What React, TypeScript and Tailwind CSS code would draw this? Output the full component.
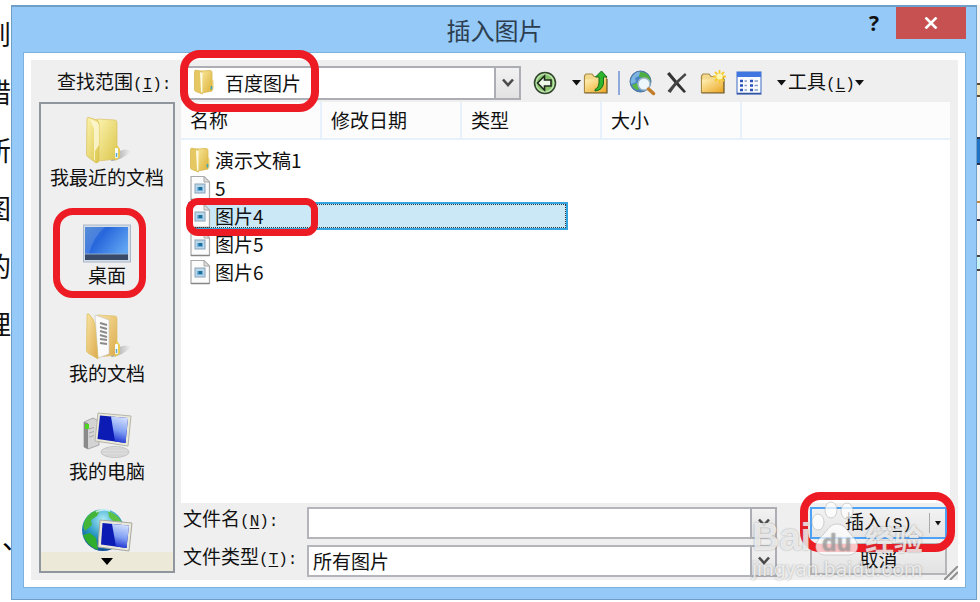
import { ReactNode, useId } from "react";

const DOC_LEFT = ["到", "错", "所", "图", "的", "理"];
const COLUMNS = ["名称", "修改日期", "类型", "大小"];
const FILES = [
  { name: "演示文稿1", folder: true },
  { name: "5" },
  { name: "图片4", selected: true },
  { name: "图片5" },
  { name: "图片6" },
];

function Ring({ className }: { className: string }) {
  return (
    <span
      aria-hidden="true"
      className={"pointer-events-none absolute z-10 border-[#ed1c24] " + className}
    />
  );
}

function Key({ children, colon = false }: { children: string; colon?: boolean }) {
  return (
    <span className="font-['Liberation_Mono',monospace] text-base">
      (<span className="underline underline-offset-2">{children}</span>){colon && ":"}
    </span>
  );
}

function Caret() {
  return (
    <svg width="9" height="6" viewBox="0 0 9 6" aria-hidden="true">
      <path d="M0 0H9L4.500 5.500Z" fill="#111" />
    </svg>
  );
}

function DropMark() {
  return (
    <span
      aria-hidden="true"
      className="pointer-events-none absolute inset-y-0 right-0 flex w-[27px] items-center justify-center border-2 border-[#acaeb3] bg-linear-to-b from-[#f2f2f2] to-[#e2e2e2]"
    >
      <svg width="12" height="10" viewBox="0 0 12 10">
        <path d="M1 1.500L6 7L11 1.500" fill="none" stroke="#4b4b4b" strokeWidth="2.600" />
      </svg>
    </span>
  );
}

/* ---------- file icons ---------- */

function SmallFolder() {
  return (
    <svg width="22" height="26" viewBox="0 0 22 26" aria-hidden="true">
      <defs>
        <linearGradient id="sf" x1="0" y1="0" x2="1" y2="1">
          <stop offset="0" stopColor="#f8e69a" />
          <stop offset="1" stopColor="#dcb238" />
        </linearGradient>
      </defs>
      <path d="M8 2L17 1.500Q19 1.500 19 3.500V22L9 24Z" fill="url(#sf)" stroke="#d9b750" strokeWidth=".8" />
      <path d="M1.500 2.500Q1.500 1 3 1.200L8.500 2.200L9.500 25L3 22.500Q1.500 22 1.500 20.500Z" fill="#e6c862" stroke="#d9b84f" strokeWidth=".8" />
      <path d="M7 3L9.500 4V24L8 23Z" fill="#fffbe2" />
      <path d="M19 10L20.500 12V20L19 22Z" fill="#e9cf72" />
      <path d="M18.500 17V20.500" stroke="#3fa5b8" strokeWidth="1.600" />
    </svg>
  );
}

function PictureFile() {
  return (
    <svg width="22" height="26" viewBox="0 0 22 26" aria-hidden="true">
      <path d="M2 1.500H15L20.500 7V24.500H2Z" fill="#fbfbfb" stroke="#a9a9a9" strokeWidth="1.200" />
      <path d="M2 24.500H20.500" stroke="#858585" strokeWidth="1.500" />
      <path d="M15 1.500V7H20.500Z" fill="#dedede" stroke="#aaa" />
      <rect x="6" y="9" width="10" height="9" fill="#b9d6ea" stroke="#8ba5b8" />
      <path d="M8 12H14V16H8Z" fill="#6fb0dd" />
      <path d="M9.500 12H13V15H9.500Z" fill="#1d6e96" />
    </svg>
  );
}

/* ---------- places icons ---------- */

function RecentIcon({ docs = false }: { docs?: boolean }) {
  const g = docs ? "docsFolder" : "recentFolder";
  return (
    <svg width="52" height="50" viewBox="0 0 52 50" aria-hidden="true">
      <defs>
        <linearGradient id={g} x1="0" y1="0" x2="1" y2="1">
          <stop offset="0" stopColor={docs ? "#f9e3a3" : "#fbf3ae"} />
          <stop offset="1" stopColor={docs ? "#dcaa4c" : "#dcc64c"} />
        </linearGradient>
        <linearGradient id={g + "Shade"} x1="0" y1="0" x2="1" y2="0">
          <stop offset="0" stopColor="#777" stopOpacity=".8" />
          <stop offset="1" stopColor="#8a8a8a" stopOpacity="0" />
        </linearGradient>
      </defs>
      <path d="M30 46Q42 45 50 36Q45 32 34 38Z" fill={"url(#" + g + "Shade)"} />
      <path d="M16 4L34 5Q36 5 36 8V44L17 46Z" fill={"url(#" + g + ")"} stroke="#dbc268" strokeWidth=".7" />
      {docs && (
        <>
          <path d="M14 4L28 9V43L17 47Z" fill="#fafafa" stroke="#c8c8c8" strokeWidth=".7" />
          <path d="M19 12L26 14M19 16L26 18M19 20L26 22M19 24L26 26M19 28L26 29M19 32L26 33" stroke="#8a8a8a" strokeWidth="2" />
        </>
      )}
      <path
        d={
          docs
            ? "M6 4Q6 2 8 3L12 8Q13 10 14 14L17 48L7 42Q5.500 41 5.500 39Z"
            : "M6 4Q6 2 8 2.500L16 5Q18 6 18 9V44Q18 48 15 48L7 42Q5.500 41 5.500 39Z"
        }
        fill={"url(#" + g + ")"}
        stroke="#d9bd58"
        strokeWidth=".7"
      />
      {!docs && <path d="M9 4L16 7Q18 8 18 12V30L14 36V46L13 45V14Z" fill="#fffbe0" opacity=".75" />}
      <path d="M36 30L39 34V42L34 46V34Z" fill="#e7cb55" />
      <rect x="34" y="33" width="3" height="10" rx="1" fill="#f6fcff" />
      <path d="M35.500 38V42" stroke="#5aa7cf" strokeWidth="1.500" />
    </svg>
  );
}

function DesktopIcon() {
  return (
    <svg width="52" height="50" viewBox="0 0 52 50" aria-hidden="true">
      <defs>
        <linearGradient id="desk" x1="0" y1="0" x2="1" y2=".6">
          <stop offset="0" stopColor="#3a7bd0" />
          <stop offset=".4" stopColor="#2767dc" />
          <stop offset="1" stopColor="#5fa5f2" />
        </linearGradient>
      </defs>
      <rect x="2.500" y="12" width="47" height="37" fill="#d5dde7" stroke="#a9b8c9" />
      <rect x="4" y="14" width="43" height="33" fill="url(#desk)" />
      <path d="M4 14H24Q12 24 8 41H4Z" fill="#fff" opacity=".14" />
      <rect x="4" y="41" width="43" height="6" fill="#384a68" />
      <path d="M4 41H47" stroke="#8ca8cf" />
    </svg>
  );
}

function ShineGradient({ id }: { id: string }) {
  return (
    <linearGradient id={id} x1=".6" y1="0" x2=".4" y2="1">
      <stop offset="0" stopColor="#d3e0fd" />
      <stop offset=".55" stopColor="#7f9df3" />
      <stop offset="1" stopColor="#1b2fd0" />
    </linearGradient>
  );
}

function ComputerIcon() {
  return (
    <svg width="52" height="50" viewBox="0 0 52 50" aria-hidden="true">
      <defs>
        <ShineGradient id="pc" />
      </defs>
      <path d="M3 13L12 9L18 12V36L7 40L3 38Z" fill="#d4d4d4" stroke="#999" strokeWidth=".8" />
      <path d="M3 13L7 14V40L3 38Z" fill="#8a8a8a" />
      <path d="M8 20L13 18.500M8 24L13 22.500M8 28L13 26.500" stroke="#aaa" />
      <rect x="4" y="15" width="4" height="5" fill="#4fd41f" />
      <ellipse cx="34" cy="43" rx="14" ry="5.500" fill="#dcdcdc" stroke="#c4c4c4" />
      <path d="M21 43H47M24 40H44M24 46H44" stroke="#cacaca" strokeWidth=".8" />
      <path d="M17 4L50 7L47 37L14 32Z" fill="#ebe9d9" stroke="#b7b6ab" />
      <path d="M19 6.500L47 9L44.500 34L16.500 30Z" fill="#0b1bb4" />
      <path d="M30 7.500L47 9L44.500 34L34 32.500Z" fill="url(#pc)" />
    </svg>
  );
}

function NetworkIcon() {
  return (
    <svg width="52" height="50" viewBox="0 0 52 50" aria-hidden="true">
      <defs>
        <radialGradient id="globe" cx=".5" cy=".25" r=".8">
          <stop offset="0" stopColor="#a9ecf6" />
          <stop offset=".5" stopColor="#2c9ac6" />
          <stop offset="1" stopColor="#0b438e" />
        </radialGradient>
        <ShineGradient id="net" />
      </defs>
      <circle cx="22" cy="23" r="21" fill="url(#globe)" />
      <path d="M4 13Q10 3 19 3L16 9L10 13L11 18L4 24Q1 19 4 13Z" fill="#43b63a" />
      <path d="M2 28L9 26L15 31L17 43Q6 39 2 28Z" fill="#2fae2e" />
      <path d="M27 4Q37 7 41 16L33 15L28 10Z" fill="#5cc243" />
      <path d="M15 5Q22 1 29 4" stroke="#e8fcff" strokeWidth="2" fill="none" opacity=".7" />
      <path d="M19 13L51 16L48 44L17 40Z" fill="#e9e8dc" stroke="#aaa99f" />
      <path d="M21.500 16L48 18.500L45.500 41L20 37.500Z" fill="#0b1bb4" />
      <path d="M31 17L48 18.500L45.500 41L35 39.500Z" fill="url(#net)" />
    </svg>
  );
}

const PLACES: { label: string; icon: ReactNode; ring?: boolean }[] = [
  { label: "我最近的文档", icon: <RecentIcon /> },
  { label: "桌面", icon: <DesktopIcon />, ring: true },
  { label: "我的文档", icon: <RecentIcon docs /> },
  { label: "我的电脑", icon: <ComputerIcon /> },
  { label: "", icon: <NetworkIcon /> },
];

/* ---------- toolbar icons ---------- */

function BackIcon() {
  return (
    <svg width="24" height="24" viewBox="0 0 24 24" aria-hidden="true">
      <circle cx="12" cy="12" r="10.500" fill="#86c46c" stroke="#33452f" strokeWidth="1.500" />
      <circle cx="12" cy="12" r="8.800" fill="none" stroke="#c2e6b3" strokeWidth="1.200" />
      <path d="M4.500 12L11.500 5V9H18V15H11.500V19Z" fill="#eef8ea" stroke="#202a1e" strokeWidth="1.600" />
    </svg>
  );
}

function FolderBase() {
  return (
    <>
      <defs>
        <linearGradient id="tf" x1="0" y1="0" x2="1" y2="1">
          <stop offset="0" stopColor="#fff0b6" />
          <stop offset="1" stopColor="#eaa51f" />
        </linearGradient>
      </defs>
      <path d="M1.500 22.500V6L3 4H9L11 6.500H23.500V22.500Z" fill="#f3d98e" stroke="#a98b45" strokeWidth="1.200" />
      <path d="M2 9.500H23.500V22.500H2Z" fill="url(#tf)" />
      <path d="M1.500 23H24V9" fill="none" stroke="#6e5a2c" strokeWidth="1.200" />
    </>
  );
}

function UpFolderIcon() {
  return (
    <svg width="26" height="25" viewBox="0 0 26 25" aria-hidden="true">
      <FolderBase />
      <path d="M12 19.500Q16 18 16 13V7H12.500L18.500 1L24 7H20.500V13Q20 20 12 21Z" fill="#2eb52e" stroke="#176b1a" />
    </svg>
  );
}

function NewFolderIcon() {
  return (
    <svg width="26" height="25" viewBox="0 0 26 25" aria-hidden="true">
      <FolderBase />
      <path d="M19.500 0V13M13 6.500H26M15 2L24 11M24 2L15 11" stroke="#f6c92c" strokeWidth="1.800" />
      <circle cx="19.500" cy="6.500" r="3" fill="#fff7b5" />
    </svg>
  );
}

function SearchWebIcon() {
  return (
    <svg width="27" height="26" viewBox="0 0 27 26" aria-hidden="true">
      <circle cx="11.500" cy="11.500" r="10.500" fill="#4a86c6" stroke="#4a6f98" />
      <path d="M3 7Q7 1 12 2L10 6L6 8L7 12L2 14Q1 11 3 7Z" fill="#7db5e0" />
      <path d="M11 2Q20 2 21.500 10L18 12L14 8L10 7Z" fill="#4fae42" />
      <path d="M3 15L8 13L10 20Q5 20 3 15Z" fill="#57b944" />
      <circle cx="15" cy="14" r="6" fill="#eef7fb" stroke="#a3b9c8" strokeWidth="1.500" />
      <path d="M19.500 19L24.500 23.500" stroke="#c17d2a" strokeWidth="3.500" strokeLinecap="round" />
    </svg>
  );
}

function DeleteIcon() {
  return (
    <svg width="22" height="24" viewBox="0 0 22 24" aria-hidden="true">
      <path d="M1 3L3.500 1Q10 9 20 20.500L18 22Q9 13 1 3Z" fill="#333" />
      <path d="M19 2L20.500 4Q11 12 4.500 22L1.500 20Q9 10 19 2Z" fill="#444" />
    </svg>
  );
}

function ViewsIcon() {
  const rows = [10, 14.5, 19];
  return (
    <svg width="26" height="24" viewBox="0 0 26 24" aria-hidden="true">
      <rect x="1" y="1" width="24" height="22" fill="#f9fbff" stroke="#5c80cc" strokeWidth="1.200" />
      <rect x="1" y="1" width="24" height="5" fill="#3f76e0" />
      <path d="M1 22.500H25" stroke="#33549b" strokeWidth="1.500" />
      {rows.map((y) => (
        <g key={y}>
          <path d={"M4 " + y + "H7M14 " + y + "H17"} stroke="#2a52b8" strokeWidth="2.600" />
          <path d={"M8.500 " + y + "H11M18.500 " + y + "H22"} stroke="#8a9dc6" strokeWidth="1.500" />
        </g>
      ))}
    </svg>
  );
}

function Watermark() {
  return (
    <div
      aria-hidden="true"
      className="pointer-events-none absolute right-[46px] bottom-[18px] z-20 flex w-[178px] flex-col text-white/75 [text-shadow:0_0_2px_rgba(100,100,100,0.6)]"
    >
      <div className="flex h-[58px] items-end">
        <span className="w-[59px] font-['Liberation_Sans',sans-serif] text-[38px] leading-[40px] font-bold">
          Bai
        </span>
        <span className="relative h-[56px] w-[54px] shrink-0">
          <svg width="54" height="56" viewBox="0 0 54 56" className="absolute inset-0">
            <g fill="#fff" fillOpacity=".75" stroke="#b5b5b5" strokeOpacity=".6">
              <ellipse cx="7" cy="21" rx="6" ry="8" />
              <ellipse cx="20" cy="9" rx="6" ry="8" />
              <ellipse cx="36" cy="10" rx="6" ry="8" />
              <path d="M26 23C34 23 37 31 42 36C50 44 47 54 37 54C31 54 21 54 15 54C4 54 2 44 9 37C16 31 18 23 26 23Z" />
            </g>
          </svg>
          <span className="absolute bottom-0 left-[11px] font-['Liberation_Sans',sans-serif] text-2xl leading-7 font-bold text-[#aaa]/60">
            du
          </span>
        </span>
        <span className="whitespace-nowrap text-[29px] leading-[38px] font-bold">经验</span>
      </div>
      <span className="font-['Roboto',sans-serif] text-[21px] leading-6">jingyan.baidu.com</span>
    </div>
  );
}

const tool = "flex shrink-0 items-center justify-center";

export default function App() {
  const id = useId();
  return (
    <div className="flex h-screen overflow-hidden bg-white pt-[5px] pb-[2px] font-['Noto_Sans_CJK_SC',sans-serif] text-[19px] leading-6 text-[#111]">
      {/* document page visible behind the dialog */}
      <div className="flex w-[11px] shrink-0 flex-col items-end overflow-hidden text-[27px] leading-[58px] text-[#111]">
        {DOC_LEFT.map((c) => (
          <span key={c}>{c}</span>
        ))}
        <span className="mt-[156px] mr-[-18px] text-black">、</span>
      </div>

      <main
        role="dialog"
        aria-label="插入图片"
        className="relative flex min-w-0 flex-1 flex-col border border-t-2 border-[#6f9fc8] bg-[#94c9f8] pr-[10px] pb-[11px] pl-[11px]"
      >
        <header className="relative flex h-[45px] shrink-0 items-center justify-center">
          <h1 className="text-2xl text-[#2c3e50]">插入图片</h1>
          <div className="absolute top-0 right-0 flex h-8 items-center">
            <button
              type="button"
              aria-label="帮助"
              className="h-8 w-[44px] font-['Open_Sans',sans-serif] text-[21px] font-bold"
            >
              ?
            </button>
            <button
              type="button"
              aria-label="关闭"
              className="flex h-8 w-[70px] items-center justify-center bg-[#c75050]"
            >
              <svg width="14" height="12" viewBox="0 0 14 12">
                <path d="M1.500 .5L12.500 11.500M12.500 .5L1.500 11.500" stroke="#fff" strokeWidth="2.600" />
              </svg>
            </button>
          </div>
        </header>

        <div className="flex min-h-0 flex-1 flex-col border border-[#7db2df] bg-white p-[7px]">
          <div className="relative flex min-h-0 flex-1 flex-col bg-[#efefef]">
            {/* look-in row */}
            <div className="flex h-[42px] shrink-0 items-center pt-[3px] pl-[26px]">
              <label htmlFor={id + "dir"} className="w-[124px] shrink-0">
                查找范围
                <Key colon>I</Key>
              </label>
              <div className="relative h-[34px] w-[340px] shrink-0">
                <select
                  id={id + "dir"}
                  className="h-full w-full appearance-none border-2 border-[#acaeb3] bg-white pl-[42px]"
                >
                  <option>百度图片</option>
                </select>
                <span className="pointer-events-none absolute top-[3px] left-3">
                  <SmallFolder />
                </span>
                <DropMark />
                <Ring className="-top-4 -bottom-3 -left-px w-[139px] rounded-[20px] border-[8px]" />
              </div>
              <div className="ml-3 flex items-center">
                <button type="button" aria-label="后退" className={tool}>
                  <BackIcon />
                </button>
                <button type="button" aria-label="后退列表" className={tool + " ml-3 w-[14px]"}>
                  <Caret />
                </button>
                <button type="button" aria-label="向上一级" className={tool}>
                  <UpFolderIcon />
                </button>
                <span className="mx-[9px] h-6 w-[2px] bg-[#8fa9dc]" />
                <button type="button" aria-label="搜索" className={tool}>
                  <SearchWebIcon />
                </button>
                <button type="button" aria-label="删除" className={tool + " ml-[10px]"}>
                  <DeleteIcon />
                </button>
                <button type="button" aria-label="新建文件夹" className={tool + " ml-3"}>
                  <NewFolderIcon />
                </button>
                <button type="button" aria-label="视图" className={tool + " ml-[10px]"}>
                  <ViewsIcon />
                </button>
                <button type="button" aria-label="视图列表" className={tool + " ml-3 w-[14px]"}>
                  <Caret />
                </button>
                <button type="button" className={tool}>
                  <span className="whitespace-nowrap">
                    工具
                    <Key>L</Key>
                  </span>
                  <Caret />
                </button>
              </div>
            </div>

            <div className="flex min-h-0 flex-1 gap-[6px] px-2">
              {/* places bar */}
              <nav className="mb-[7px] flex w-[136px] shrink-0 flex-col border-2 border-[#8f969e]">
                <ul className="flex min-h-0 flex-1 flex-col overflow-hidden pt-[11px]">
                  {PLACES.map((p) => (
                    <li key={p.label} className="h-[98px] shrink-0">
                      <button
                        type="button"
                        aria-label={p.label || "网上邻居"}
                        className="relative flex w-full flex-col items-center"
                      >
                        {p.icon}
                        <span className="whitespace-nowrap">{p.label}</span>
                        {p.ring && (
                          <Ring className="-top-[5px] -bottom-[11px] left-3 w-[93px] rounded-[20px] border-[7px]" />
                        )}
                      </button>
                    </li>
                  ))}
                </ul>
                <button
                  type="button"
                  aria-label="更多"
                  className="flex h-[19px] shrink-0 items-center justify-center bg-[#ece9d8]"
                >
                  <svg width="12" height="7" viewBox="0 0 12 7">
                    <path d="M0 0H12L6 7Z" fill="#000" />
                  </svg>
                </button>
              </nav>

              <div className="flex min-w-0 flex-1 flex-col">
                <div className="min-h-0 flex-1 bg-white">
                  <table className="w-full table-fixed border-collapse text-left">
                    <thead>
                      <tr className="h-[37px] border-b-2 border-[#e6f1fb] bg-[#fcfcfc]">
                        {COLUMNS.map((c) => (
                          <th
                            key={c}
                            className="w-[140px] border-r-2 border-[#e6f1fb] p-0 pl-[9px] font-normal"
                          >
                            {c}
                          </th>
                        ))}
                        <td className="p-0" />
                      </tr>
                    </thead>
                    <tbody>
                      <tr className="h-[7px]">
                        <td colSpan={5} className="p-0" />
                      </tr>
                      {FILES.map((f) => (
                        <tr key={f.name} className="h-7">
                          <td colSpan={5} className="p-0 pl-[7px]">
                            <button
                              type="button"
                              className={
                                f.selected
                                  ? "relative flex h-7 w-[380px] items-center bg-[#cbe8f6] outline-2 -outline-offset-2 outline-[#35a5df]"
                                  : "flex h-7 w-[380px] items-center"
                              }
                            >
                              {f.selected && (
                                <span className="absolute inset-[2px] border border-dotted border-[#333]" />
                              )}
                              <span className="w-[27px] shrink-0 pl-px">
                                {f.folder ? <SmallFolder /> : <PictureFile />}
                              </span>
                              <span>{f.name}</span>
                              {f.selected && (
                                <Ring className="-top-1 -bottom-[6px] -left-[2px] w-[132px] rounded-[12px] border-[7px]" />
                              )}
                            </button>
                          </td>
                        </tr>
                      ))}
                    </tbody>
                  </table>
                </div>

                {/* file name, file type and actions */}
                <form
                  className="flex shrink-0 gap-[33px] pt-1 pr-[3px] pb-[3px]"
                  onSubmit={(e) => e.preventDefault()}
                >
                  <div className="flex min-w-0 flex-1 flex-col gap-[6px]">
                    <div className="flex h-8">
                      <label htmlFor={id + "name"} className="w-[126px] shrink-0 pl-[2px] leading-[22px]">
                        文件名
                        <Key colon>N</Key>
                      </label>
                      <div className="relative min-w-0 flex-1">
                        <input
                          id={id + "name"}
                          type="text"
                          className="h-full w-full border-2 border-[#b4b5bb] bg-white px-1"
                        />
                        <DropMark />
                      </div>
                    </div>
                    <div className="flex h-8">
                      <label htmlFor={id + "type"} className="w-[126px] shrink-0 pl-[2px] leading-[22px]">
                        文件类型
                        <Key colon>T</Key>
                      </label>
                      <div className="relative min-w-0 flex-1">
                        <select
                          id={id + "type"}
                          className="h-full w-full appearance-none border-2 border-[#b4b5bb] bg-white pl-1"
                        >
                          <option>所有图片</option>
                        </select>
                        <DropMark />
                      </div>
                    </div>
                  </div>
                  <div className="flex w-[137px] shrink-0 flex-col gap-1">
                    <div className="relative flex h-8 border-2 border-[#4ea2f5] bg-linear-to-b from-[#f2f2f2] to-[#e4e4e4]">
                      <button type="submit" className="flex-1 pl-4 whitespace-nowrap">
                        插入
                        <Key>S</Key>
                      </button>
                      <button
                        type="button"
                        aria-label="插入选项"
                        className="my-1 flex w-4 items-center justify-center border-l border-[#aaa]"
                      >
                        <svg width="6" height="5" viewBox="0 0 6 5">
                          <path d="M0 0H6L3 4.500Z" fill="#111" />
                        </svg>
                      </button>
                      <Ring className="-top-[17px] -right-[10px] -bottom-[15px] -left-[12px] rounded-[20px] border-[8px]" />
                    </div>
                    <button
                      type="button"
                      className="h-8 border-2 border-[#b4b5b9] bg-linear-to-b from-[#f0f0f0] to-[#e2e2e2]"
                    >
                      取消
                    </button>
                  </div>
                </form>
              </div>
            </div>
            <svg
              width="14"
              height="14"
              viewBox="0 0 14 14"
              className="absolute right-0 bottom-0"
              aria-hidden="true"
            >
              <path d="M0 14L14 0M6 14L14 6" stroke="#8f8f8f" strokeWidth="2" />
            </svg>
          </div>
        </div>
        <Watermark />
      </main>

      {/* right edge of the document page */}
      <div className="flex w-[3px] shrink-0 flex-col bg-[#f2f2f2] pt-[78px]" aria-hidden="true">
        <span className="h-[14px] border-y-2 border-[#5a4a32] bg-[#f6e6bd]" />
        <span className="mt-[40px] h-7 border-y-2 border-[#23344c] bg-[#1f72c4]" />
        <span className="mt-9 h-[2px] bg-[#c48a3c]" />
        <span className="mt-4 h-[2px] bg-[#2c2440]" />
        <span className="mt-[34px] h-4 border-y-2 border-[#444] bg-[#c9f3f5]" />
      </div>
    </div>
  );
}
